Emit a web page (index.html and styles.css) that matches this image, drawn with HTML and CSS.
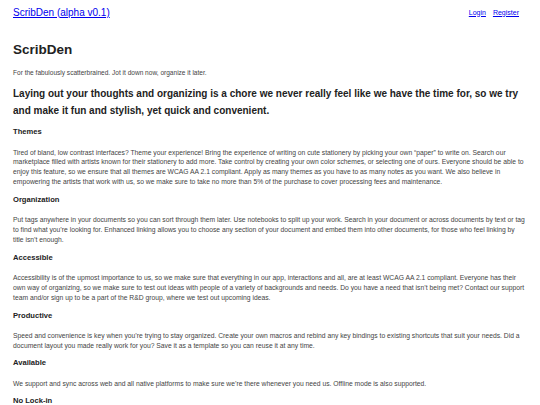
FILE: index.html
```html
<!DOCTYPE html>
<html lang="en">
<head>
<meta charset="utf-8">
<title>ScribDen</title>
<link rel="stylesheet" href="styles.css">
</head>
<body>
<header class="topbar">
  <a class="brand" href="#">ScribDen (alpha v0.1)</a>
  <nav class="auth">
    <a href="#">Login</a>
    <a href="#">Register</a>
  </nav>
</header>
<main class="content">
  <h1 class="title">ScribDen</h1>
  <p class="tagline">For the fabulously scatterbrained. Jot it down now, organize it later.</p>
  <h2 class="lead">Laying out your thoughts and organizing is a chore we never really feel like we have the time for, so we try and make it fun and stylish, yet quick and convenient.</h2>

  <section class="feature">
    <h3>Themes</h3>
    <p>Tired of bland, low contrast interfaces? Theme your experience! Bring the experience of writing on cute stationery by picking your own “paper” to write on. Search our marketplace filled with artists known for their stationery to add more. Take control by creating your own color schemes, or selecting one of ours. Everyone should be able to enjoy this feature, so we ensure that all themes are WCAG AA 2.1 compliant. Apply as many themes as you have to as many notes as you want. We also believe in empowering the artists that work with us, so we make sure to take no more than 5% of the purchase to cover processing fees and maintenance.</p>
  </section>

  <section class="feature">
    <h3>Organization</h3>
    <p>Put tags anywhere in your documents so you can sort through them later. Use notebooks to split up your work. Search in your document or across documents by text or tag to find what you’re looking for. Enhanced linking allows you to choose any section of your document and embed them into other documents, for those who feel linking by title isn’t enough.</p>
  </section>

  <section class="feature">
    <h3>Accessible</h3>
    <p>Accessibility is of the upmost importance to us, so we make sure that everything in our app, interactions and all, are at least WCAG AA 2.1 compliant. Everyone has their own way of organizing, so we make sure to test out ideas with people of a variety of backgrounds and needs. Do you have a need that isn’t being met? Contact our support team and/or sign up to be a part of the R&amp;D group, where we test out upcoming ideas.</p>
  </section>

  <section class="feature">
    <h3>Productive</h3>
    <p>Speed and convenience is key when you’re trying to stay organized. Create your own macros and rebind any key bindings to existing shortcuts that suit your needs. Did a document layout you made really work for you? Save it as a template so you can reuse it at any time.</p>
  </section>

  <section class="feature">
    <h3>Available</h3>
    <p>We support and sync across web and all native platforms to make sure we’re there whenever you need us. Offline mode is also supported.</p>
  </section>

  <section class="feature">
    <h3>No Lock-in</h3>
    <p>Your notes are yours. Export everything at any time in open formats so you are never stuck with us.</p>
  </section>
</main>
</body>
</html>
```

FILE: styles.css
```css
html, body {
  margin: 0;
  padding: 0;
  background: #ffffff;
}

body {
  font-family: "Liberation Sans", Arial, sans-serif;
  color: #444444;
}

.topbar {
  display: flex;
  justify-content: space-between;
  align-items: center;
  padding: 5px 21px 0 13px;
  height: 14px;
}

.brand {
  font-size: 10px;
  line-height: 13px;
  color: #0000ee;
}

.auth {
  display: flex;
  gap: 7px;
  font-size: 7px;
  line-height: 9px;
}

.auth a {
  color: #0000ee;
}

.content {
  padding: 0 13px;
}

.title {
  font-size: 13.5px;
  line-height: 16px;
  margin: 23px 0 0;
  color: #222222;
  font-weight: bold;
}

.tagline {
  font-size: 6.55px;
  line-height: 9.5px;
  margin: 10px 0 0;
}

.lead {
  font-size: 10px;
  line-height: 17.5px;
  margin: 7px 0 0;
  color: #222222;
  font-weight: bold;
}

.feature h3 {
  font-size: 7.6px;
  line-height: 11px;
  margin: 6.5px 0 0;
  color: #222222;
  font-weight: bold;
}

.feature p {
  font-size: 6.75px;
  line-height: 9.95px;
  margin: 10.5px 0 0;
}
```
